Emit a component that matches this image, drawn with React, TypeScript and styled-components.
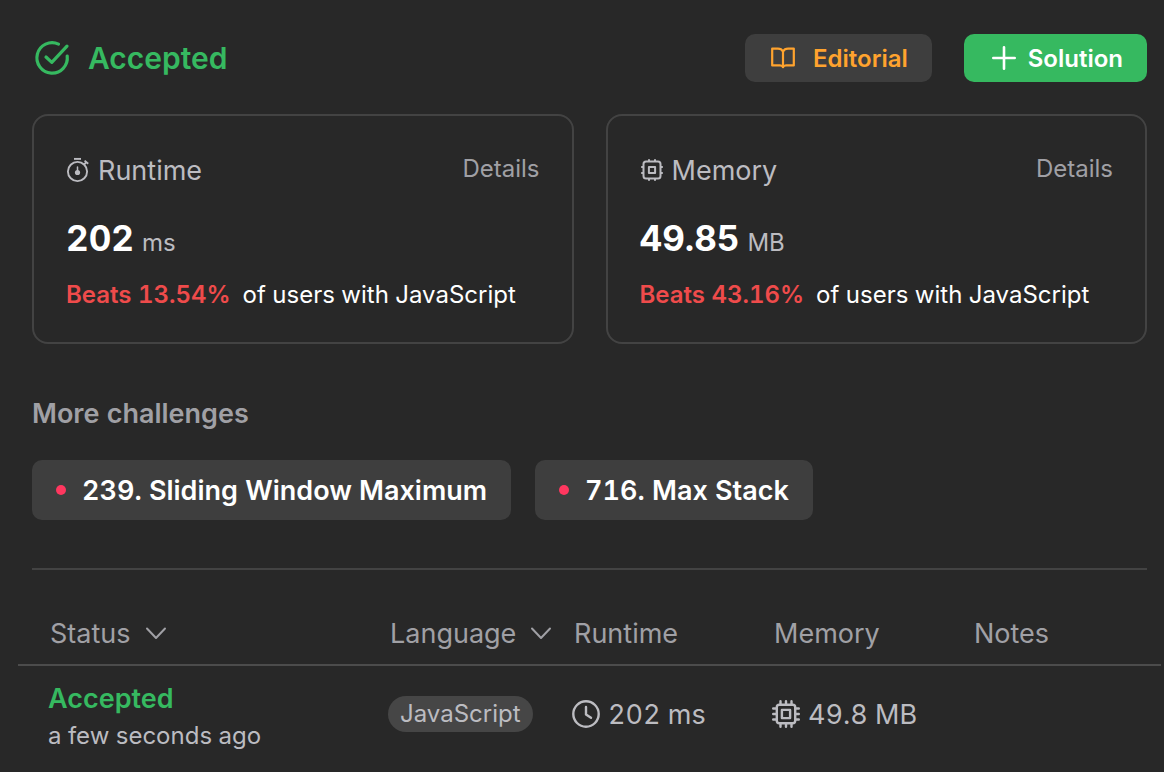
import React from "react";
import styled, { createGlobalStyle } from "styled-components";

const GlobalStyle = createGlobalStyle`
  * { box-sizing: border-box; }
  body {
    margin: 0;
    background: #282828;
    color: #fff;
    font-family: Inter, "Liberation Sans", sans-serif;
    font-variant-numeric: tabular-nums;
    -webkit-font-smoothing: antialiased;
  }
  button { font-family: inherit; border: 0; cursor: pointer; }
`;

const Page = styled.main`
  padding: 34px 3px 10px 18px;
`;

const Content = styled.div`
  padding: 0 14px;
`;

const Header = styled.header`
  display: flex;
  align-items: center;
  justify-content: space-between;
  height: 48px;
`;

const Title = styled.h1`
  display: flex;
  align-items: center;
  gap: 16px;
  margin: 0;
  font-size: 30px;
  font-weight: 600;
  color: #36b960;
`;

const Actions = styled.div`
  display: flex;
  gap: 32px;
`;

const ActionButton = styled.button<{ $primary?: boolean }>`
  display: flex;
  align-items: center;
  gap: ${(p) => (p.$primary ? 8 : 16)}px;
  height: 48px;
  padding: 0 24px;
  border-radius: 10px;
  font-size: 24px;
  font-weight: 600;
  background: ${(p) => (p.$primary ? "#36b960" : "#3e3e3e")};
  color: ${(p) => (p.$primary ? "#fff" : "#ffa32e")};
`;

const Cards = styled.section`
  display: grid;
  grid-template-columns: 1fr 1fr;
  gap: 32px;
  margin-top: 32px;
`;

const Card = styled.article`
  padding: 32px;
  border: 2px solid #434343;
  border-radius: 16px;
`;

const CardHead = styled.div`
  display: flex;
  align-items: center;
  justify-content: space-between;
  height: 44px;
`;

const CardTitle = styled.h2`
  display: flex;
  align-items: center;
  gap: 8px;
  margin: 0;
  font-size: 27px;
  font-weight: 400;
  color: #bcbcc1;
`;

const DetailsButton = styled.button`
  padding: 0 0 4px;
  background: none;
  font-size: 24px;
  color: #a0a0a5;
`;

const Value = styled.div`
  display: flex;
  align-items: baseline;
  gap: 8px;
  margin-top: 22px;
  font-size: 35px;
  line-height: 48px;
  font-weight: 700;
`;

const Unit = styled.span`
  font-size: 24px;
  line-height: 30px;
  font-weight: 400;
  color: #bcbcc1;
`;

const Beats = styled.p`
  display: flex;
  gap: 12px;
  margin: 18px 0 0;
  font-size: 24px;
  line-height: 30px;
  white-space: nowrap;
`;

const Percent = styled.span`
  font-weight: 600;
  color: #ef4b4b;
`;

const SectionTitle = styled.h2`
  margin: 52px 0 0;
  font-size: 27px;
  line-height: 36px;
  font-weight: 600;
  color: #a0a0a5;
`;

const Challenges = styled.div`
  display: flex;
  gap: 24px;
  margin-top: 28px;
`;

const Challenge = styled.a`
  display: flex;
  align-items: center;
  gap: 16px;
  height: 60px;
  padding: 0 24px;
  border-radius: 10px;
  background: #3e3e3e;
  color: #fff;
  font-size: 27px;
  font-weight: 600;
  text-decoration: none;
  white-space: nowrap;
`;

const Dot = styled.span`
  width: 10px;
  height: 10px;
  border-radius: 50%;
  background: #ff375f;
`;

const Divider = styled.hr`
  height: 2px;
  margin: 48px 0 32px;
  border: 0;
  background: #434343;
`;

const Table = styled.table`
  width: 100%;
  table-layout: fixed;
  border-collapse: separate;
  border-spacing: 0;
  text-align: left;
  white-space: nowrap;
`;

const HeadCell = styled.th<{ $width?: number }>`
  width: ${(p) => (p.$width ? `${p.$width}px` : "auto")};
  height: 64px;
  padding: 0 0 0 16px;
  border-bottom: 2px solid #4c4c4c;
  font-size: 27px;
  font-weight: 400;
  color: #a0a0a5;
  &:first-child { padding-left: 32px; }
`;

const SortButton = styled.button`
  display: flex;
  align-items: center;
  gap: 14px;
  padding: 0;
  background: none;
  font-size: inherit;
  color: inherit;
`;

const Cell = styled.td`
  height: 96px;
  padding: 0 0 0 14px;
  font-size: 27px;
  color: #bcbcc1;
  &:first-child { padding: 8px 0 0 30px; }
`;

const Status = styled.div`
  font-weight: 600;
  line-height: 36px;
  color: #36b960;
`;

const Time = styled.div`
  font-size: 24px;
  line-height: 38px;
`;

const Pill = styled.span`
  display: inline-block;
  padding: 0 12px;
  border-radius: 18px;
  background: #464646;
  font-size: 24px;
  line-height: 36px;
`;

const Metric = styled.div`
  display: flex;
  align-items: center;
  gap: 8px;
`;

const Icon = styled.svg`
  flex: none;
  display: block;
  fill: none;
  stroke: currentColor;
  stroke-linecap: round;
  stroke-linejoin: round;
`;

const CheckIcon = () => (
  <Icon width="40" height="40" viewBox="0 0 40 40" strokeWidth="3.2" aria-hidden="true">
    <path d="M26.5 6.1A15.2 15.2 0 1 0 35.2 18" />
    <path d="M14 19l5.8 5.4L35 8.2" />
  </Icon>
);

const BookIcon = () => (
  <Icon width="28" height="28" viewBox="0 0 28 28" strokeWidth="2.2" aria-hidden="true">
    <path d="M14 7.4C13 5.6 11.2 4.6 9 4.6H3.200v16.800H11c1.600 0 2.600.6 3 1.800.4-1.200 1.400-1.800 3-1.800h7.800V4.600H19c-2.200 0-4 1-5 2.800z" />
    <path d="M14 7.4V23" />
  </Icon>
);

const PlusIcon = () => (
  <Icon width="32" height="32" viewBox="0 0 32 32" strokeWidth="2.6" aria-hidden="true">
    <path d="M16 5.3v21.4M5.3 16h21.4" />
  </Icon>
);

const StopwatchIcon = () => (
  <Icon width="24" height="26" viewBox="0 0 24 26" strokeWidth="1.9" aria-hidden="true">
    <circle cx="11.5" cy="14.500" r="9.6" />
    <path d="M8 1.900h7" strokeLinecap="butt" />
    <path d="M18.600 3.600l3.600 3.200M18 7.500l2.200-2.200" strokeLinecap="butt" />
    <path d="M11.5 10v4" strokeWidth="1.5" />
    <circle cx="11.5" cy="15.500" r="2.6" fill="currentColor" stroke="none" />
  </Icon>
);

const SmallChipIcon = () => (
  <Icon width="24" height="24" viewBox="0 0 24 24" strokeWidth="2" aria-hidden="true">
    <rect x="3.5" y="3.5" width="17" height="17" rx="2.5" />
    <rect x="8.9" y="8.9" width="6.2" height="6.2" />
    <path d="M9 3.5V1.200M15 3.5V1.200M9 20.500v2.300M15 20.500v2.300M3.500 9H1.200M3.500 15H1.200M20.500 9h2.300M20.500 15h2.300" strokeLinecap="butt" />
  </Icon>
);

const ChipIcon = () => (
  <Icon width="28" height="28" viewBox="0 0 28 28" strokeWidth="2.4" aria-hidden="true">
    <rect x="4.8" y="4.8" width="18.4" height="18.4" rx="2.5" />
    <rect x="9.9" y="9.9" width="8.2" height="8.2" />
    <path d="M8.5 4V1.200M14 4V1.200M19.500 4V1.200M8.500 24v2.800M14 24v2.800M19.500 24v2.800M4 8.500H1.200M4 14H1.200M4 19.500H1.200M24 8.500h2.800M24 14h2.800M24 19.500h2.800" />
  </Icon>
);

const ClockIcon = () => (
  <Icon width="28" height="28" viewBox="0 0 28 28" strokeWidth="2.4" aria-hidden="true">
    <circle cx="14" cy="14" r="12.7" />
    <path d="M14 7v7.5l5 3.3" />
  </Icon>
);

const ChevronIcon = () => (
  <Icon width="22" height="14" viewBox="0 0 22 14" strokeWidth="2" aria-hidden="true">
    <path d="M2 2.500l9 9.500 9-9.500" />
  </Icon>
);

type StatProps = {
  icon: React.ReactNode;
  title: string;
  value: string;
  unit: string;
  percent: string;
};

const StatCard = ({ icon, title, value, unit, percent }: StatProps) => (
  <Card>
    <CardHead>
      <CardTitle>{icon}{title}</CardTitle>
      <DetailsButton type="button">Details</DetailsButton>
    </CardHead>
    <Value>{value}<Unit>{unit}</Unit></Value>
    <Beats>
      <Percent>Beats {percent}</Percent>
      <span>of users with JavaScript</span>
    </Beats>
  </Card>
);

export default function App() {
  return (
    <Page>
      <GlobalStyle />
      <Content>
        <Header>
          <Title><CheckIcon />Accepted</Title>
          <Actions>
            <ActionButton type="button"><BookIcon />Editorial</ActionButton>
            <ActionButton type="button" $primary><PlusIcon />Solution</ActionButton>
          </Actions>
        </Header>
        <Cards>
          <StatCard icon={<StopwatchIcon />} title="Runtime" value="202" unit="ms" percent="13.54%" />
          <StatCard icon={<SmallChipIcon />} title="Memory" value="49.85" unit="MB" percent="43.16%" />
        </Cards>
        <SectionTitle>More challenges</SectionTitle>
        <Challenges>
          <Challenge href="#sliding-window-maximum"><Dot />239. Sliding Window Maximum</Challenge>
          <Challenge href="#max-stack"><Dot />716. Max Stack</Challenge>
        </Challenges>
        <Divider />
      </Content>
      <Table>
        <thead>
          <tr>
            <HeadCell $width={356}><SortButton type="button">Status<ChevronIcon /></SortButton></HeadCell>
            <HeadCell $width={184}><SortButton type="button">Language<ChevronIcon /></SortButton></HeadCell>
            <HeadCell $width={200}>Runtime</HeadCell>
            <HeadCell $width={200}>Memory</HeadCell>
            <HeadCell>Notes</HeadCell>
          </tr>
        </thead>
        <tbody>
          <tr>
            <Cell><Status>Accepted</Status><Time>a few seconds ago</Time></Cell>
            <Cell><Pill>JavaScript</Pill></Cell>
            <Cell><Metric><ClockIcon />202 ms</Metric></Cell>
            <Cell><Metric><ChipIcon />49.8 MB</Metric></Cell>
            <Cell />
          </tr>
        </tbody>
      </Table>
    </Page>
  );
}
